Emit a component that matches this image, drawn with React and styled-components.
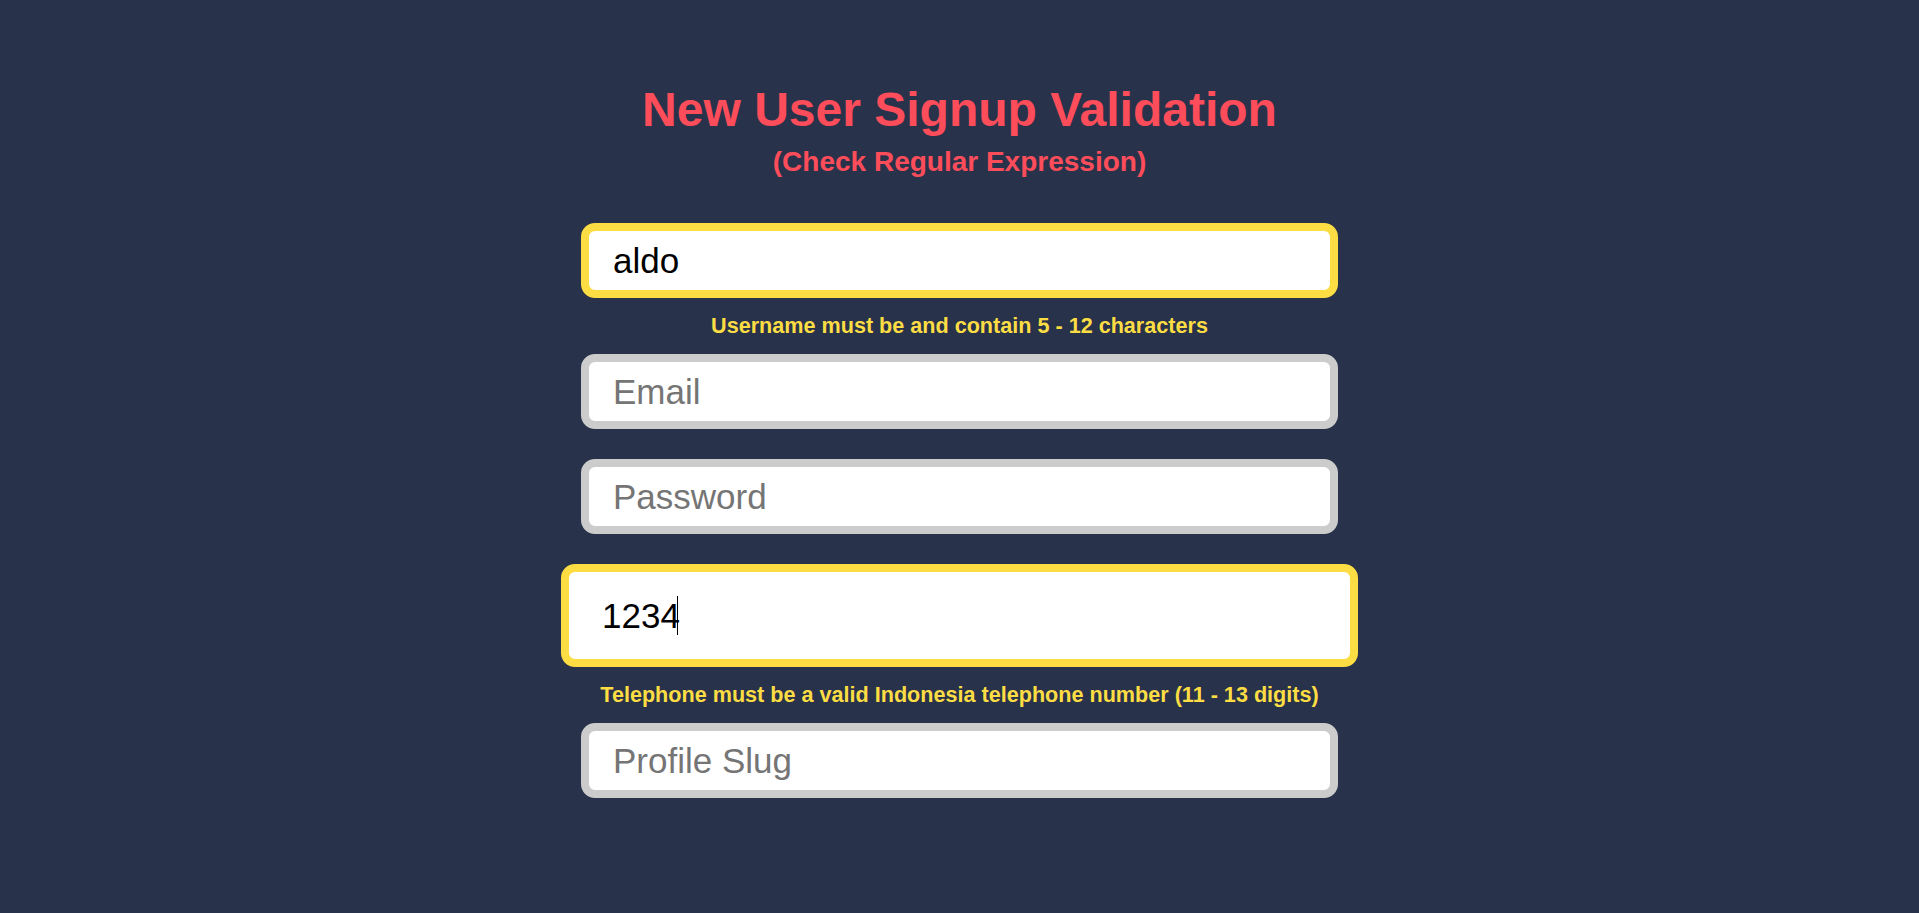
import React from 'react';
import styled, { createGlobalStyle } from 'styled-components';

const GlobalStyle = createGlobalStyle`
  html, body {
    margin: 0;
    padding: 0;
    background-color: #28324a;
    font-family: "Liberation Sans", Arial, sans-serif;
  }
`;

const Page = styled.main`
  min-height: 913px;
  padding-top: 82px;
  box-sizing: border-box;
  display: flex;
  flex-direction: column;
  align-items: center;
  background-color: #28324a;
`;

const Title = styled.h1`
  margin: 0;
  font-size: 48px;
  line-height: 56px;
  font-weight: bold;
  color: #fd4d5a;
  text-align: center;
`;

const Subtitle = styled.h2`
  margin: 8px 0 0;
  font-size: 28px;
  line-height: 32px;
  font-weight: bold;
  color: #fd4d5a;
  text-align: center;
`;

const Form = styled.form`
  margin-top: 45px;
  display: flex;
  flex-direction: column;
  align-items: center;
`;

const Field = styled.div`
  position: relative;
  display: flex;
  flex-direction: column;
  align-items: center;
  margin-bottom: ${(p) => (p.$hasError ? '0' : '30px')};
`;

const Input = styled.input`
  box-sizing: border-box;
  width: ${(p) => (p.$focused ? '797px' : '757px')};
  height: ${(p) => (p.$focused ? '103px' : '75px')};
  padding: 0 ${(p) => (p.$focused ? '33px' : '24px')};
  border: 8px solid ${(p) => (p.$invalid ? '#fcdd44' : '#cccccc')};
  border-radius: 14px;
  background: #ffffff;
  font-family: "Liberation Sans", Arial, sans-serif;
  font-size: 35px;
  color: #000000;
  caret-color: transparent;
  outline: none;

  &::placeholder {
    color: #757575;
  }
`;

const Caret = styled.span`
  position: absolute;
  top: 32px;
  left: calc(38px + 2.224em);
  font-size: 35px;
  width: 1px;
  height: 39px;
  background: #000000;
`;

const Error = styled.p`
  margin: 0;
  padding: 15px 0 16px;
  font-size: 21.6px;
  line-height: 25px;
  font-weight: bold;
  color: #fcdd44;
  text-align: center;
`;

const fields = [
  { name: 'username', placeholder: 'Username', value: 'aldo', error: 'Username must be and contain 5 - 12 characters' },
  { name: 'email', placeholder: 'Email', value: '' },
  { name: 'password', placeholder: 'Password', value: '', type: 'password' },
  { name: 'telephone', placeholder: 'Telephone', value: '1234', focused: true, error: 'Telephone must be a valid Indonesia telephone number (11 - 13 digits)' },
  { name: 'slug', placeholder: 'Profile Slug', value: '' },
];

export default function App() {
  return (
    <>
      <GlobalStyle />
      <Page>
        <Title>New User Signup Validation</Title>
        <Subtitle>(Check Regular Expression)</Subtitle>
        <Form onSubmit={(e) => e.preventDefault()}>
          {fields.map((f) => (
            <Field key={f.name} $hasError={!!f.error}>
              <Input
                name={f.name}
                type={f.type || 'text'}
                placeholder={f.placeholder}
                defaultValue={f.value}
                $invalid={!!f.error}
                $focused={f.focused}
              />
              {f.focused && <Caret />}
              {f.error && <Error>{f.error}</Error>}
            </Field>
          ))}
        </Form>
      </Page>
    </>
  );
}
